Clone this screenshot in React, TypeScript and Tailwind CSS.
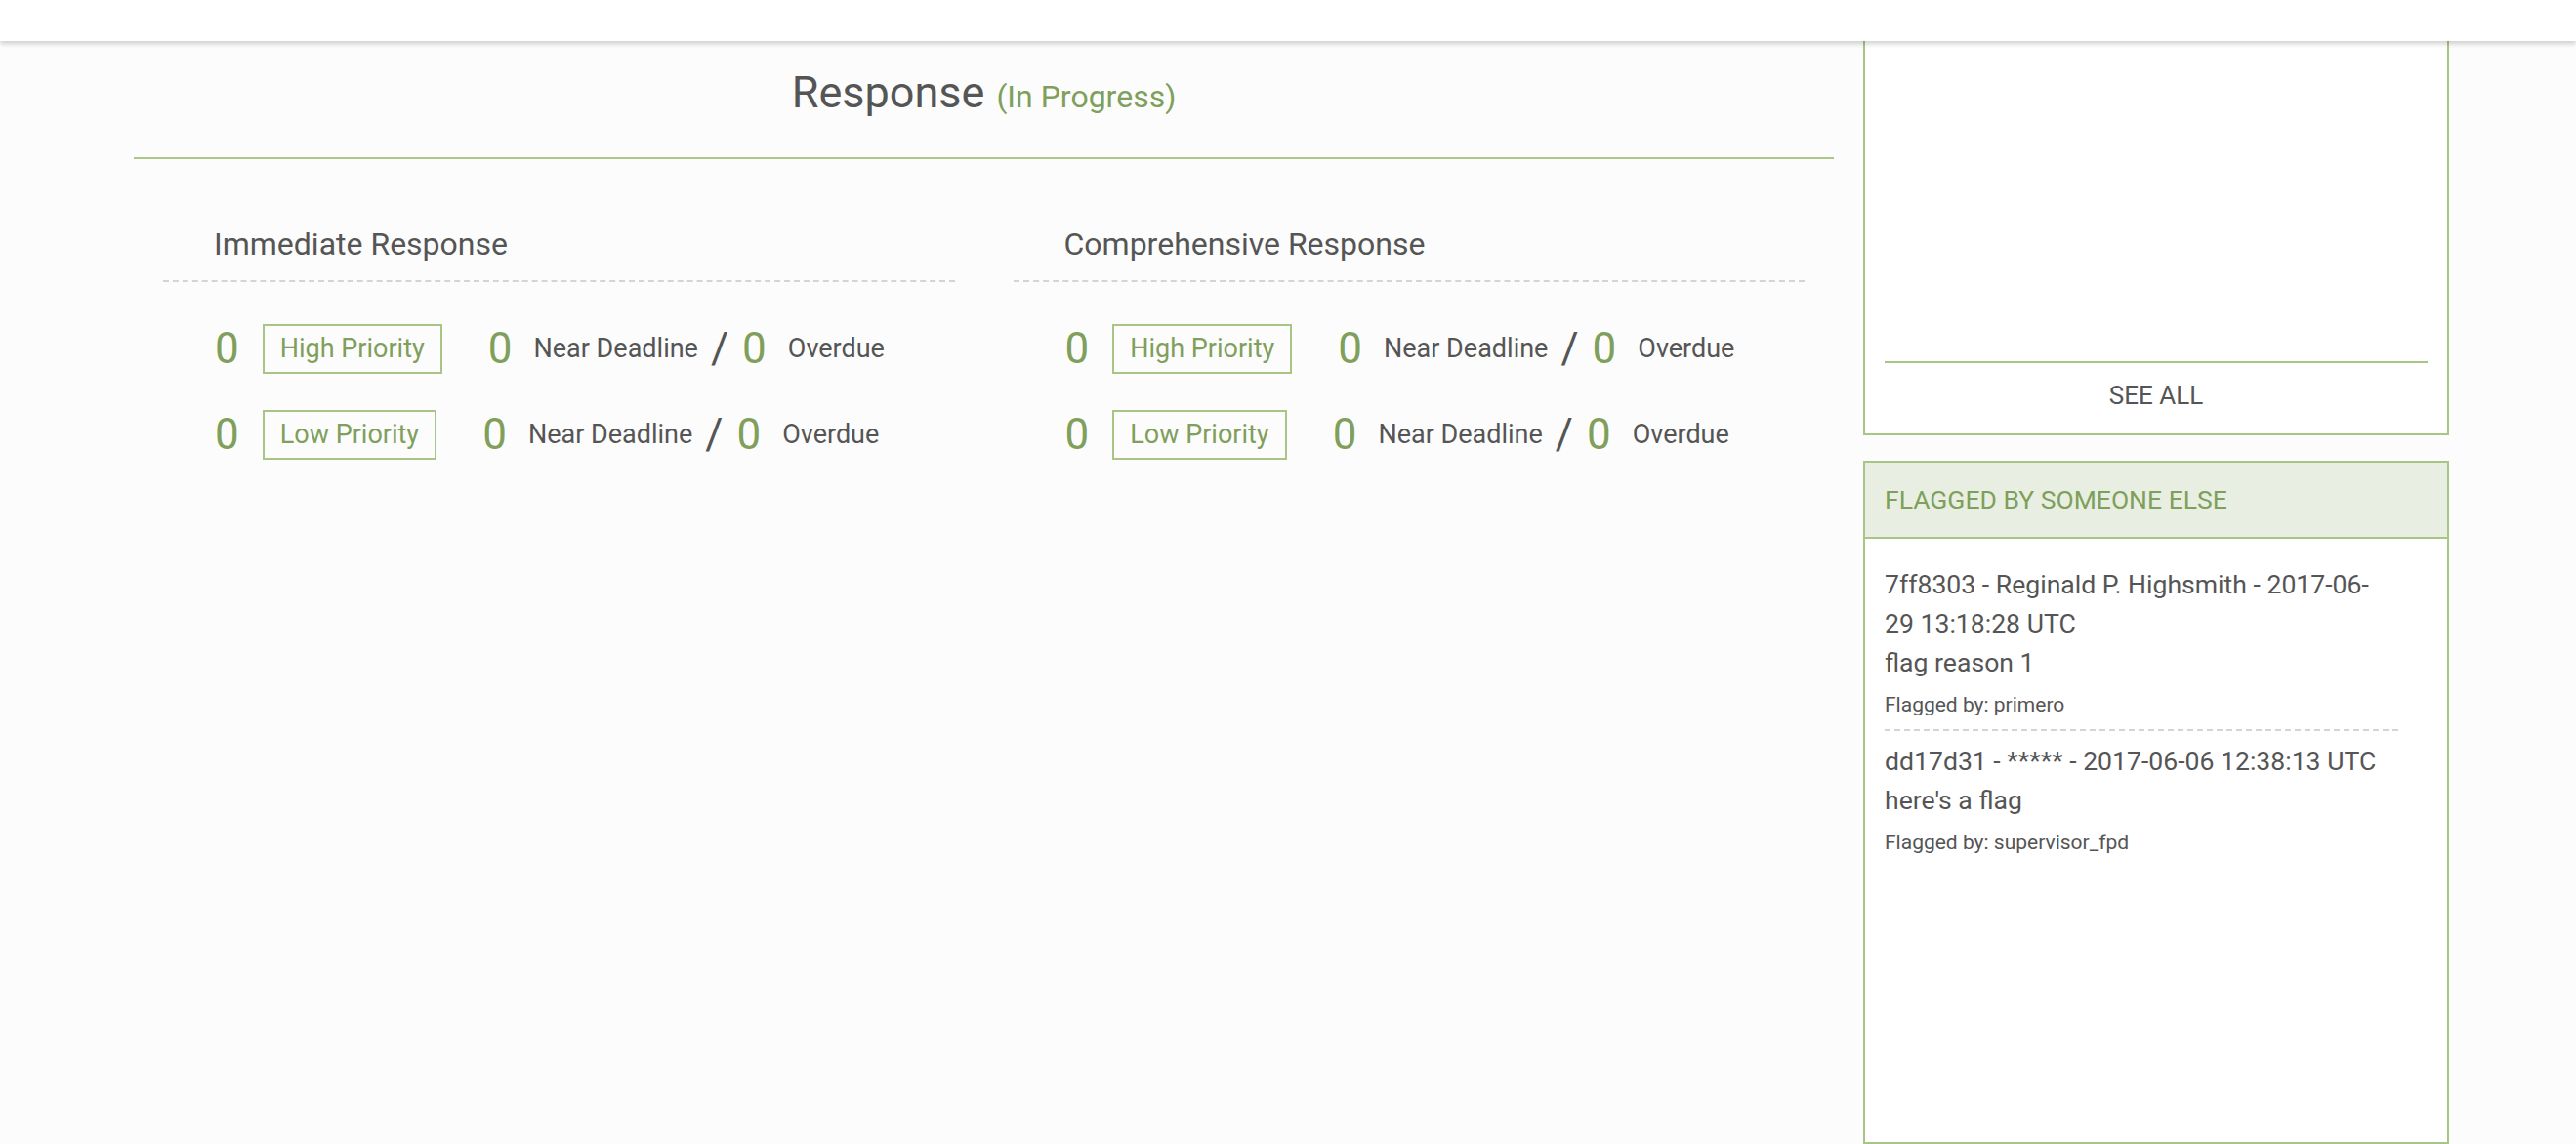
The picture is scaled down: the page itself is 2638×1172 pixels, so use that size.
import React from 'react';

type Row = { label: string; near: number; overdue: number; count: number };

const rows: Row[] = [
  { label: 'High Priority', count: 0, near: 0, overdue: 0 },
  { label: 'Low Priority', count: 0, near: 0, overdue: 0 },
];

const flags = [
  {
    title: '7ff8303 - Reginald P. Highsmith - 2017-06-29 13:18:28 UTC',
    reason: 'flag reason 1',
    by: 'primero',
  },
  {
    title: 'dd17d31 - ***** - 2017-06-06 12:38:13 UTC',
    reason: "here's a flag",
    by: 'supervisor_fpd',
  },
];

const ResponseColumn = ({ title }: { title: string }) => (
  <div className="flex-1 px-[30px]">
    <div className="pl-[52px] pt-[67px] pb-[17px] border-b-2 border-dashed border-[#d4d4d4]">
      <h2 className="text-[32px] leading-[40px] text-[#555555]">{title}</h2>
    </div>
    <div className="flex flex-col gap-[37px] pl-[53px] pt-[43px]">
      {rows.map((row) => (
        <div key={row.label} className="flex items-center h-[51px]">
          <span className="text-[44px] leading-[51px] text-[#7f9f5b] mr-[24px]">{row.count}</span>
          <span className="h-[51px] flex items-center px-[16px] border-2 border-[#a9c586] text-[27px] text-[#7f9f5b]">
            {row.label}
          </span>
          <span className="text-[44px] leading-[51px] text-[#7f9f5b] ml-[47px] mr-[22px]">{row.near}</span>
          <span className="text-[27px] text-[#555555]">Near Deadline</span>
          <span className="text-[44px] leading-[51px] text-[#555555] ml-[13px] mr-[14px]">/</span>
          <span className="text-[44px] leading-[51px] text-[#7f9f5b] mr-[22px]">{row.overdue}</span>
          <span className="text-[27px] text-[#555555]">Overdue</span>
        </div>
      ))}
    </div>
  </div>
);

export default function App() {
  return (
    <div className="min-h-[1172px] bg-[#fcfcfc] font-['Roboto',sans-serif] overflow-hidden">
      {/* top bar */}
      <div className="relative z-10 h-[42px] bg-white shadow-[0_3px_5px_rgba(0,0,0,0.18)]" />

      <div className="flex pl-[137px]">
        {/* main */}
        <div className="w-[1741px]">
          <div className="pt-[23px] pb-[32px] border-b-2 border-[#adc78a] flex justify-center items-baseline">
            <span className="text-[45px] leading-[60px] text-[#555555]">Response</span>
            <span className="text-[32px] leading-[60px] text-[#7f9f5b] ml-[12px]">(In Progress)</span>
          </div>
          <div className="flex">
            <ResponseColumn title="Immediate Response" />
            <ResponseColumn title="Comprehensive Response" />
          </div>
        </div>

        {/* sidebar */}
        <div className="ml-[30px] w-[600px] flex flex-col">
          <div className="h-[404px] bg-white border-x-2 border-b-2 border-[#a9c586] flex flex-col justify-end">
            <div className="mx-[20px] border-t-2 border-[#a9c586] pt-[15px] pb-[21px] text-center text-[26px] leading-[36px] text-[#555555]">
              SEE ALL
            </div>
          </div>

          <div className="mt-[26px] h-[700px] bg-white border-2 border-[#a9c586]">
            <div className="h-[78px] bg-[#e8efe2] border-b-2 border-[#a9c586] flex items-center px-[20px] text-[26.5px] text-[#7f9f5b] uppercase">
              Flagged by someone else
            </div>
            <div className="px-[20px] pt-[27px]">
              {flags.map((f, i) => (
                <div
                  key={f.title}
                  className={`w-[526px] ${i === 0 ? 'pb-[9px] border-b-2 border-dashed border-[#d4d4d4]' : 'pt-[11px]'}`}
                >
                  <div className="w-[510px] text-[26.6px] leading-[40px] text-[#555555]">{f.title}</div>
                  <div className="text-[26.6px] leading-[40px] text-[#555555]">{f.reason}</div>
                  <div className="mt-[7px] text-[21px] leading-[32px] text-[#555555]">Flagged by: {f.by}</div>
                </div>
              ))}
            </div>
          </div>
        </div>
      </div>
    </div>
  );
}
